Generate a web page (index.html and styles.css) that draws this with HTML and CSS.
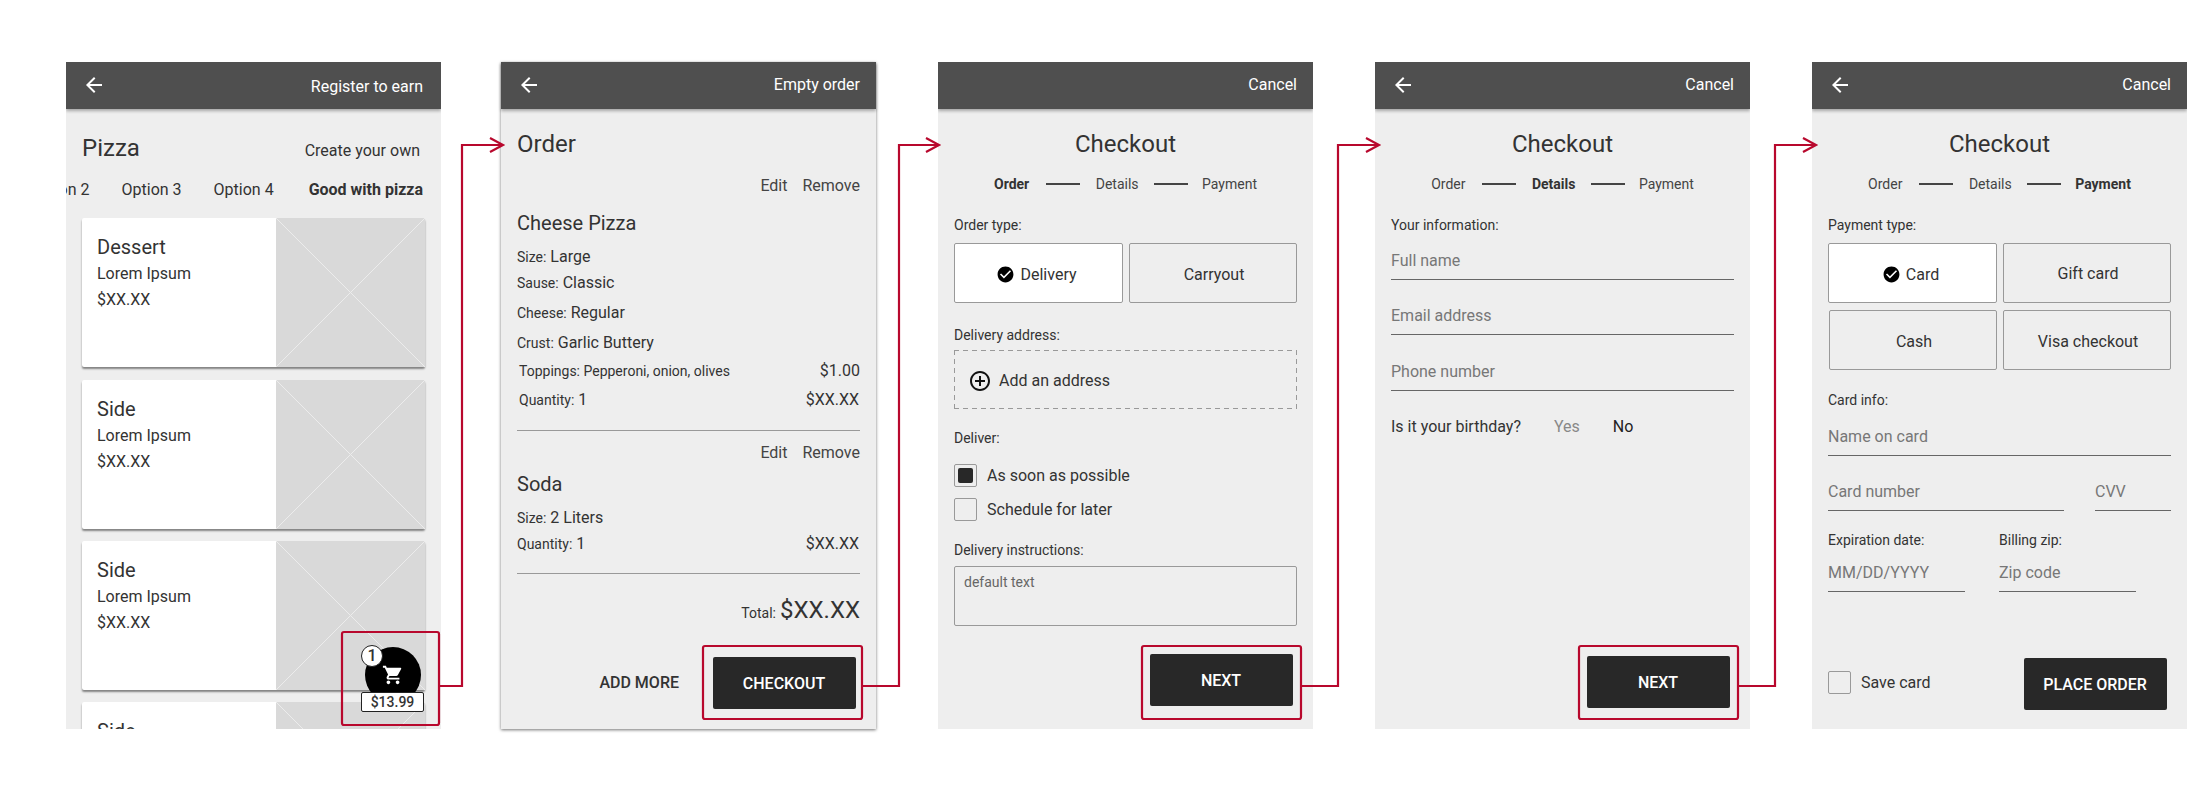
FILE: index.html
```html
<!DOCTYPE html>
<html lang="en">
<head>
<meta charset="utf-8">
<title>Pizza ordering flow wireframes</title>
<link rel="stylesheet" href="styles.css">
</head>
<body>
<div class="stage">

  <section class="screen screen-first">
    <header class="bar bar-first">
      <svg class="back" viewBox="0 0 24 24"><path d="M20 11H7.83l5.59-5.59L12 4l-8 8 8 8 1.41-1.41L7.83 13H20v-2z"/></svg>
      <span class="bar-link bar-link-low">Register to earn</span>
    </header>
    <div class="menu-head">
      <h1 class="title">Pizza</h1>
      <span class="own">Create your own</span>
    </div>
    <nav class="tabs">
      <span>Option 2</span><span>Option 3</span><span>Option 4</span><b class="tab-active">Good with pizza</b>
    </nav>
    <div class="cards">
      <article class="card">
        <div class="card-text"><h2 class="item">Dessert</h2><p class="line mt-3">Lorem Ipsum</p><p class="line mt-6">$XX.XX</p></div>
        <svg class="ph" viewBox="0 0 149 149" preserveAspectRatio="none"><path d="M0 0L149 149M149 0L0 149"/></svg>
      </article>
      <article class="card">
        <div class="card-text"><h2 class="item">Side</h2><p class="line mt-3">Lorem Ipsum</p><p class="line mt-6">$XX.XX</p></div>
        <svg class="ph" viewBox="0 0 149 149" preserveAspectRatio="none"><path d="M0 0L149 149M149 0L0 149"/></svg>
      </article>
      <article class="card">
        <div class="card-text"><h2 class="item">Side</h2><p class="line mt-3">Lorem Ipsum</p><p class="line mt-6">$XX.XX</p></div>
        <svg class="ph" viewBox="0 0 149 149" preserveAspectRatio="none"><path d="M0 0L149 149M149 0L0 149"/></svg>
      </article>
      <article class="card">
        <div class="card-text"><h2 class="item">Side</h2><p class="line mt-3">Lorem Ipsum</p><p class="line mt-6">$XX.XX</p></div>
        <svg class="ph" viewBox="0 0 149 149" preserveAspectRatio="none"><path d="M0 0L149 149M149 0L0 149"/></svg>
      </article>
    </div>
    <div class="fab">
      <svg class="cart" viewBox="0 0 24 24"><path d="M7 18c-1.1 0-1.99.9-1.99 2S5.9 22 7 22s2-.9 2-2-.9-2-2-2zM1 2v2h2l3.6 7.59-1.35 2.45c-.16.28-.25.61-.25.96 0 1.1.9 2 2 2h12v-2H7.42c-.14 0-.25-.11-.25-.25l.03-.12.9-1.63h7.45c.75 0 1.41-.41 1.75-1.03l3.58-6.49c.08-.14.12-.31.12-.48 0-.55-.45-1-1-1H5.21l-.94-2H1zm16 16c-1.1 0-1.99.9-1.99 2s.89 2 1.99 2 2-.9 2-2-.9-2-2-2z"/></svg>
    </div>
    <span class="fab-count">1</span>
    <span class="fab-price">$13.99</span>
  </section>

  <section class="screen screen-raised">
    <header class="bar">
      <svg class="back" viewBox="0 0 24 24"><path d="M20 11H7.83l5.59-5.59L12 4l-8 8 8 8 1.41-1.41L7.83 13H20v-2z"/></svg>
      <span class="bar-link">Empty order</span>
    </header>
    <div class="content">
      <h1 class="title">Order</h1>
      <div class="edit mt-16"><span>Edit</span><span>Remove</span></div>
      <h2 class="item mt-13">Cheese Pizza</h2>
      <p class="line mt-10"><small>Size:</small> Large</p>
      <p class="line mt-6"><small>Sause:</small> Classic</p>
      <p class="line mt-10"><small>Cheese:</small> Regular</p>
      <p class="line mt-10"><small>Crust:</small> Garlic Buttery</p>
      <p class="line price-row inset mt-8"><small>Toppings: Pepperoni, onion, olives</small><span>$1.00</span></p>
      <p class="line price-row inset mt-9"><span><small>Quantity:</small> 1</span><span class="nudge">$XX.XX</span></p>
      <hr class="rule mt-20">
      <div class="edit mt-12"><span>Edit</span><span>Remove</span></div>
      <h2 class="item mt-7">Soda</h2>
      <p class="line mt-10"><small>Size:</small> 2 Liters</p>
      <p class="line price-row mt-6"><span><small>Quantity:</small> 1</span><span class="nudge">$XX.XX</span></p>
      <hr class="rule mt-19">
      <p class="total mt-20"><small>Total:</small><span class="total-value">$XX.XX</span></p>
      <div class="actions mt-31">
        <span class="add-more">ADD MORE</span>
        <span class="btn">CHECKOUT</span>
      </div>
    </div>
  </section>

  <section class="screen">
    <header class="bar bar-end"><span class="bar-link">Cancel</span></header>
    <div class="content">
      <h1 class="title title-center">Checkout</h1>
      <div class="steps mt-14"><b>Order</b><i></i><span>Details</span><i></i><span>Payment</span></div>
      <p class="label mt-21">Order type:</p>
      <div class="choices mt-8">
        <div class="choice choice-on">
          <svg class="tick" viewBox="0 0 24 24"><path d="M12 2C6.48 2 2 6.48 2 12s4.48 10 10 10 10-4.48 10-10S17.52 2 12 2zm-2 15l-5-5 1.41-1.41L10 14.17l7.59-7.59L19 8l-9 9z"/></svg>
          Delivery
        </div>
        <div class="choice">Carryout</div>
      </div>
      <p class="label mt-22">Delivery address:</p>
      <div class="address mt-5">
        <svg class="plus" viewBox="0 0 24 24"><path d="M13 7h-2v4H7v2h4v4h2v-4h4v-2h-4V7zm-1-5C6.48 2 2 6.48 2 12s4.48 10 10 10 10-4.48 10-10S17.52 2 12 2zm0 18c-4.41 0-8-3.59-8-8s3.59-8 8-8 8 3.59 8 8-3.59 8-8 8z"/></svg>
        Add an address
      </div>
      <p class="label mt-19">Deliver:</p>
      <div class="check mt-16"><span class="box box-on"></span>As soon as possible</div>
      <div class="check mt-11"><span class="box"></span>Schedule for later</div>
      <p class="label mt-19">Delivery instructions:</p>
      <div class="area mt-6">default text</div>
      <div class="actions mt-28"><span class="btn">NEXT</span></div>
    </div>
  </section>

  <section class="screen">
    <header class="bar">
      <svg class="back" viewBox="0 0 24 24"><path d="M20 11H7.83l5.59-5.59L12 4l-8 8 8 8 1.41-1.41L7.83 13H20v-2z"/></svg>
      <span class="bar-link">Cancel</span>
    </header>
    <div class="content">
      <h1 class="title title-center">Checkout</h1>
      <div class="steps mt-14"><span>Order</span><i></i><b>Details</b><i></i><span>Payment</span></div>
      <p class="label mt-21">Your information:</p>
      <div class="field mt-16">Full name</div>
      <div class="field mt-26">Email address</div>
      <div class="field mt-27">Phone number</div>
      <div class="birthday mt-26"><span>Is it your birthday?</span><span class="no-pick">Yes</span><span class="pick">No</span></div>
      <div class="actions mt-219"><span class="btn">NEXT</span></div>
    </div>
  </section>

  <section class="screen">
    <header class="bar">
      <svg class="back" viewBox="0 0 24 24"><path d="M20 11H7.83l5.59-5.59L12 4l-8 8 8 8 1.41-1.41L7.83 13H20v-2z"/></svg>
      <span class="bar-link">Cancel</span>
    </header>
    <div class="content">
      <h1 class="title title-center">Checkout</h1>
      <div class="steps mt-14"><span>Order</span><i></i><span>Details</span><i></i><b>Payment</b></div>
      <p class="label mt-21">Payment type:</p>
      <div class="choices mt-8">
        <div class="choice choice-on">
          <svg class="tick" viewBox="0 0 24 24"><path d="M12 2C6.48 2 2 6.48 2 12s4.48 10 10 10 10-4.48 10-10S17.52 2 12 2zm-2 15l-5-5 1.41-1.41L10 14.17l7.59-7.59L19 8l-9 9z"/></svg>
          Card
        </div>
        <div class="choice choice-lift">Gift card</div>
      </div>
      <div class="choices mt-7">
        <div class="choice choice-cash">Cash</div>
        <div class="choice">Visa checkout</div>
      </div>
      <p class="label mt-20">Card info:</p>
      <div class="field mt-17">Name on card</div>
      <div class="field-row mt-26">
        <div class="field field-long">Card number</div>
        <div class="field field-cvv">CVV</div>
      </div>
      <div class="field-row field-row-pair mt-19">
        <div class="pair"><p class="label">Expiration date:</p><div class="field mt-13">MM/DD/YYYY</div></div>
        <div class="pair"><p class="label">Billing zip:</p><div class="field mt-13">Zip code</div></div>
      </div>
      <div class="place mt-66">
        <div class="check check-save"><span class="box"></span>Save card</div>
        <span class="btn">PLACE ORDER</span>
      </div>
    </div>
  </section>

  <svg class="flow" viewBox="0 0 2211 803">
    <rect x="342" y="632" width="97" height="93" rx="2"/>
    <path d="M440 686H462V145H502M490 138L503 145L490 152"/>
    <rect x="703" y="646" width="159" height="73" rx="2"/>
    <path d="M862 686H899V145H937M926 138L939 145L926 152"/>
    <rect x="1142" y="646" width="159" height="73" rx="2"/>
    <path d="M1301 686H1338V145H1377M1366 138L1379 145L1366 152"/>
    <rect x="1579" y="646" width="159" height="73" rx="2"/>
    <path d="M1738 686H1775V145H1815M1803 138L1816 145L1803 152"/>
  </svg>
</div>
</body>
</html>
```
FILE: styles.css
```css
* { box-sizing: border-box; }
html, body { margin: 0; padding: 0; background: #fff; }
h1, h2, p, hr { margin: 0; padding: 0; }
body { font-family: Roboto, "Liberation Sans", sans-serif; color: #333; }

.stage {
  position: relative;
  width: 2211px;
  height: 803px;
  overflow: hidden;
  display: flex;
  gap: 62px;
  padding: 62px 0 0 66px;
}
.screen {
  position: relative;
  flex: 0 0 375px;
  height: 667px;
  background: #eee;
  overflow: hidden;
}
.screen-first { margin-right: -2px; }
.screen-raised { box-shadow: 0 1px 3px rgba(0,0,0,.55); overflow: visible; }

.bar {
  position: relative;
  z-index: 1;
  height: 47px;
  background: #4f4f4f;
  box-shadow: 0 2px 3px rgba(0,0,0,.3);
  display: flex;
  align-items: center;
  justify-content: space-between;
  padding: 0 16px;
}
.bar-end { justify-content: flex-end; }
.bar-first { padding-right: 18px; }
.back { width: 24px; height: 24px; fill: #fff; margin-top: -2px; }
.bar-link { color: #fff; font-size: 16px; line-height: 20px; margin-top: -1px; }
.bar-link-low { margin-top: 2px; }

.content { padding: 19px 16px 0; }
.title { font-size: 24px; line-height: 32px; font-weight: 400; color: #333; }
.title-center { text-align: center; }
.item { font-size: 20px; line-height: 28px; font-weight: 400; color: #333; }
.line { font-size: 16px; line-height: 20px; height: 20px; color: #333; }
.line small, .total small { font-size: 14px; }
.label { font-size: 14px; line-height: 20px; height: 20px; color: #333; }

.mt-3 { margin-top: 3px; }
.mt-5 { margin-top: 5px; }
.mt-6 { margin-top: 6px; }
.mt-7 { margin-top: 7px; }
.mt-8 { margin-top: 8px; }
.mt-9 { margin-top: 9px; }
.mt-10 { margin-top: 10px; }
.mt-11 { margin-top: 11px; }
.mt-12 { margin-top: 12px; }
.mt-13 { margin-top: 13px; }
.mt-14 { margin-top: 14px; }
.mt-16 { margin-top: 16px; }
.mt-17 { margin-top: 17px; }
.mt-19 { margin-top: 19px; }
.mt-20 { margin-top: 20px; }
.mt-21 { margin-top: 21px; }
.mt-22 { margin-top: 22px; }
.mt-26 { margin-top: 26px; }
.mt-27 { margin-top: 27px; }
.mt-28 { margin-top: 28px; }
.mt-31 { margin-top: 31px; }
.mt-66 { margin-top: 66px; }
.mt-219 { margin-top: 219px; }

/* menu */
.menu-head {
  display: flex;
  justify-content: space-between;
  align-items: center;
  height: 32px;
  margin-top: 23px;
  padding: 0 21px 0 16px;
}
.own { font-size: 16px; line-height: 20px; margin-top: 6px; }
.tabs {
  display: flex;
  justify-content: flex-end;
  gap: 32px;
  height: 20px;
  margin-top: 16px;
  padding-right: 18px;
  font-size: 16px;
  line-height: 20px;
  overflow: hidden;
  white-space: nowrap;
}
.tabs > * { flex: none; }
.tab-active { font-weight: 700; margin-left: 3px; }
.cards { display: flex; flex-direction: column; gap: 12.3px; margin: 18.3px 16px 0; }
.card {
  flex: none;
  height: 149px;
  display: grid;
  grid-template-columns: 194px 149px;
  background: #fff;
  border-radius: 2px;
  box-shadow: 0 2px 2px rgba(0,0,0,.45);
}
.card-text { padding: 15px 0 0 15px; }
.ph { width: 149px; height: 149px; background: #d9d9d9; display: block; }
.ph path { stroke: #ececec; stroke-width: 1; fill: none; }

.fab {
  position: absolute;
  left: 299px;
  top: 585px;
  width: 56px;
  height: 56px;
  border-radius: 50%;
  background: #000;
  display: flex;
  align-items: center;
  justify-content: center;
}
.cart { width: 22px; height: 22px; fill: #fff; }
.fab-count {
  position: absolute;
  left: 295px;
  top: 583px;
  width: 22px;
  height: 22px;
  border-radius: 50%;
  background: #fff;
  border: 1px solid #222;
  font-size: 16px;
  font-weight: 500;
  line-height: 20px;
  text-align: center;
}
.fab-price {
  position: absolute;
  left: 295px;
  top: 630px;
  width: 63px;
  height: 20px;
  background: #fff;
  border: 1px solid #222;
  border-radius: 2px;
  font-size: 14px;
  font-weight: 500;
  line-height: 18px;
  text-align: center;
}

/* order */
.edit {
  display: flex;
  justify-content: flex-end;
  gap: 15px;
  font-size: 16px;
  line-height: 20px;
  height: 20px;
  color: #444;
}
.price-row { display: flex; justify-content: space-between; }
.inset { padding-left: 2px; }
.nudge { margin-right: 1px; }
.rule { border: 0; height: 1px; background: #999; }
.total {
  display: flex;
  justify-content: flex-end;
  align-items: baseline;
  gap: 4px;
  height: 32px;
  line-height: 32px;
}
.total-value { font-size: 24px; }
.actions { display: flex; justify-content: flex-end; align-items: center; padding-right: 4px; }
.add-more { font-size: 16px; font-weight: 500; line-height: 20px; margin-right: 34px; }
.btn {
  flex: none;
  width: 143px;
  height: 52px;
  padding: 1px 1px 0 0;
  border-radius: 2px;
  background: #282828;
  color: #fff;
  font-size: 16px;
  font-weight: 500;
  line-height: 52px;
  text-align: center;
}

/* checkout */
.steps {
  display: flex;
  justify-content: center;
  align-items: center;
  gap: 15.5px;
  font-size: 14px;
  line-height: 20px;
  height: 20px;
  color: #444;
}
.steps b { font-weight: 700; color: #333; }
.steps i { display: block; width: 34px; height: 2px; background: #444; }
.steps i:nth-of-type(1) { margin-left: 1.5px; }
.steps i:nth-of-type(2) { margin-right: -1.5px; }
.choices { display: grid; grid-template-columns: 169px 168px; gap: 6px; }
.choice {
  height: 60px;
  border: 1px solid #999;
  border-radius: 2px;
  display: flex;
  align-items: center;
  justify-content: center;
  gap: 5px;
  font-size: 16px;
  padding: 2px 0 0 2px;
  color: #333;
}
.choice-on { background: #fff; padding: 2px 4px 0 0; }
.choice-lift { padding-top: 0; }
.choice-cash { margin-left: 1px; }
.tick { width: 19px; height: 19px; fill: #000; flex: none; }
.address {
  height: 59px;
  background-image:
    repeating-linear-gradient(90deg, #999 0 5px, transparent 5px 9px),
    repeating-linear-gradient(90deg, #999 0 5px, transparent 5px 9px),
    repeating-linear-gradient(0deg, #999 0 5px, transparent 5px 9px),
    repeating-linear-gradient(0deg, #999 0 5px, transparent 5px 9px);
  background-size: 100% 1px, 100% 1px, 1px 100%, 1px 100%;
  background-position: left top, left bottom, left top, right top;
  background-repeat: no-repeat;
  display: flex;
  align-items: center;
  gap: 7px;
  padding: 2px 0 0 14px;
  font-size: 16px;
}
.plus { width: 24px; height: 24px; fill: #111; flex: none; }
.check {
  display: flex;
  align-items: center;
  gap: 10px;
  height: 23px;
  font-size: 16px;
  color: #333;
}
.box {
  flex: none;
  width: 23px;
  height: 23px;
  border: 1px solid #999;
  border-radius: 2px;
  display: flex;
  align-items: center;
  justify-content: center;
}
.box-on::before {
  content: "";
  width: 15px;
  height: 15px;
  border-radius: 2px;
  background: #282828;
}
.area {
  height: 60px;
  border: 1px solid #999;
  border-radius: 2px;
  padding: 5px 9px;
  font-size: 14px;
  line-height: 20px;
  color: #666;
}
.field {
  height: 29px;
  padding-bottom: 8px;
  border-bottom: 1px solid #666;
  font-size: 16px;
  line-height: 20px;
  color: #777;
}
.field-row { display: flex; justify-content: space-between; }
.field-long { width: 236px; }
.field-cvv { width: 76px; }
.field-row-pair { justify-content: flex-start; gap: 34px; }
.pair { width: 137px; }
.birthday { display: flex; height: 20px; font-size: 16px; line-height: 20px; }
.no-pick { margin-left: 33px; color: #888; }
.pick { margin-left: 33px; color: #222; }
.place { display: flex; justify-content: space-between; align-items: center; padding-right: 4px; }
.check-save { margin-top: -3px; }

/* flow annotations */
.flow {
  position: absolute;
  left: 0;
  top: 0;
  width: 2211px;
  height: 803px;
  pointer-events: none;
  z-index: 5;
}
.flow rect, .flow path { fill: none; stroke: #b8082d; stroke-width: 2.2; }
```
